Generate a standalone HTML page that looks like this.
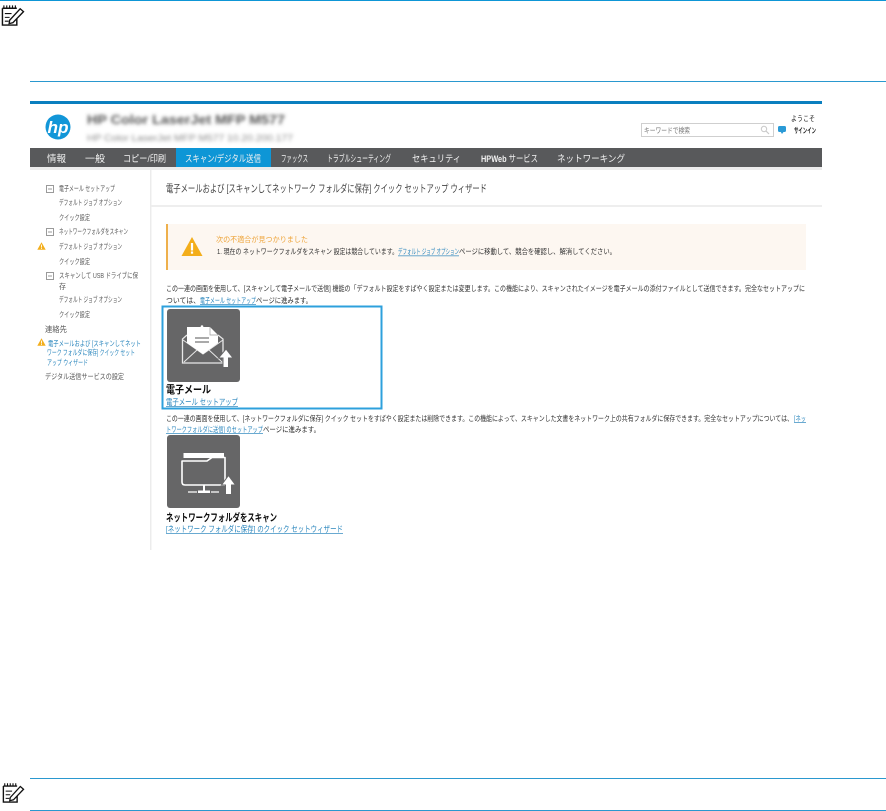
<!DOCTYPE html>
<html lang="ja"><head><meta charset="utf-8"><title>クイック セットアップ ウィザード</title>
<style>
html,body{margin:0;padding:0;background:#fff;width:886px;height:811px;overflow:hidden}
svg{display:block}
text{font-family:"Liberation Sans","Noto Sans CJK JP",sans-serif;font-size:8px;fill:#444}
.s{filter:url(#t)}
.side text{font-size:7.5px;fill:#5a5a5a}
.nav text{font-size:9.5px;fill:#f2f2f2}
.p text{font-size:7.5px;fill:#333}
.l{fill:#2a86bd!important}
</style></head><body>
<svg width="886" height="811" viewBox="0 0 886 811" xmlns="http://www.w3.org/2000/svg">
<defs>
<filter id="t" x="-5%" y="-30%" width="110%" height="160%"><feGaussianBlur stdDeviation="0.3"/></filter>
<filter id="b" x="-10%" y="-60%" width="120%" height="220%"><feGaussianBlur stdDeviation="1.8"/></filter>
<symbol id="note" viewBox="0 0 24 24" overflow="visible">
<path d="M1.5 5.5H16.5M1.5 5.5V23H16.5V15" fill="none" stroke="#111" stroke-width="1.5"/>
<path d="M3 5V2.5M6 5V2.5M9 5V2.5M12 5V2.5M15 5V2.5" stroke="#111" stroke-width="1.2"/>
<path d="M4 11H11M4 15H9M4 19H8" stroke="#111" stroke-width="1.1"/>
<path d="M9 18L20 6L23.5 9L12.5 20.5L8.5 21.5Z" fill="#fff" stroke="#111" stroke-width="1.4"/>
</symbol>
<symbol id="warn" viewBox="0 0 22 20" overflow="visible">
<path d="M11 .5L21.5 19.5H.5Z" fill="#f3ae1b"/>
<rect x="9.9" y="6.5" width="2.2" height="7.5" fill="#fff"/><rect x="9.9" y="15" width="2.2" height="2.2" fill="#fff"/>
</symbol>
</defs>
<rect width="886" height="811" fill="#fff"/>

<!-- note rules -->
<rect x="0" y="0" width="886" height="1" fill="#0e96d6"/>
<rect x="30" y="81" width="856" height="1" fill="#2a98cf"/>
<use href="#note" x="1" y="3" width="23" height="23"/>
<rect x="30" y="778" width="856" height="1" fill="#2a98cf"/>
<rect x="30" y="810" width="856" height="1" fill="#2a98cf"/>
<use href="#note" x="2" y="781" width="22" height="22"/>

<!-- header -->
<rect x="30" y="101" width="792" height="3" fill="#0a7fbf"/>
<circle cx="58" cy="127" r="12.5" fill="#1296d8"/>
<text x="47.500" y="133" style="font-size:17px;font-weight:bold;font-style:italic;fill:#fff" textLength="21" lengthAdjust="spacingAndGlyphs">hp</text>
<g filter="url(#b)">
<text x="87" y="124" style="font-size:13px;font-weight:bold;fill:#555" textLength="198" lengthAdjust="spacingAndGlyphs">HP Color LaserJet MFP M577</text>
<text x="87" y="141" style="font-size:9px;fill:#8a8a8a" textLength="206" lengthAdjust="spacingAndGlyphs">HP Color LaserJet MFP M577   10.20.200.177</text>
</g>

<!-- search -->
<rect x="641.500" y="123.500" width="132" height="13" fill="#fff" stroke="#cfcfcf"/>
<g class="s">
<text x="644" y="133" style="font-size:7.5px;fill:#777" textLength="46" lengthAdjust="spacingAndGlyphs">キーワードで検索</text>
<text x="791" y="121" style="font-size:7.5px;fill:#222" textLength="24" lengthAdjust="spacingAndGlyphs">ようこそ</text>
<text x="794" y="133" style="font-size:7.5px;fill:#222;font-weight:bold" textLength="22" lengthAdjust="spacingAndGlyphs">サインイン</text>
</g>
<circle cx="764" cy="129" r="2.7" fill="none" stroke="#c8c8c8"/><path d="M766 131L769 134" stroke="#c8c8c8" stroke-width="1.2"/>
<path d="M778 127.500a1.500 1.500 0 0 1 1.500-1.500h5a1.500 1.500 0 0 1 1.500 1.500v3a1.500 1.500 0 0 1-1.500 1.500h-1l-1.500 2-1.200-2h-1.300a1.500 1.500 0 0 1-1.500-1.500z" fill="#2a9ad6"/>

<!-- nav -->
<rect x="30" y="148" width="792" height="19" fill="#58595b"/>
<rect x="30" y="167" width="792" height="3" fill="#ececec"/>
<rect x="176" y="148" width="95" height="19" fill="#0e96d6"/>
<g class="nav s">
<text x="47" y="162" textLength="19" lengthAdjust="spacingAndGlyphs">情報</text>
<text x="85" y="162" textLength="20" lengthAdjust="spacingAndGlyphs">一般</text>
<text x="123" y="162" textLength="43" lengthAdjust="spacingAndGlyphs">コピー/印刷</text>
<text x="185" y="162" textLength="76" lengthAdjust="spacingAndGlyphs">スキャン/デジタル送信</text>
<text x="281" y="162" textLength="27" lengthAdjust="spacingAndGlyphs">ファックス</text>
<text x="327" y="162" textLength="64" lengthAdjust="spacingAndGlyphs">トラブルシューティング</text>
<text x="412" y="162" textLength="49" lengthAdjust="spacingAndGlyphs">セキュリティ</text>
<text x="481" y="162" textLength="57" lengthAdjust="spacingAndGlyphs"><tspan font-weight="bold">HPWeb</tspan> サービス</text>
<text x="557" y="162" textLength="68" lengthAdjust="spacingAndGlyphs">ネットワーキング</text>
</g>

<!-- sidebar -->
<rect x="150" y="170" width="1.500" height="380" fill="#ececec"/>
<g fill="none" stroke="#9a9a9a">
<rect x="46.500" y="185.500" width="7" height="7"/><path d="M48 189H52"/>
<rect x="46.500" y="228.500" width="7" height="7"/><path d="M48 232H52"/>
<rect x="46.500" y="272.500" width="7" height="7"/><path d="M48 276H52"/>
</g>
<use href="#warn" x="37" y="242" width="9" height="8"/>
<use href="#warn" x="37" y="338" width="9" height="8"/>
<g class="side s">
<text x="59" y="191" textLength="56" lengthAdjust="spacingAndGlyphs">電子メール セットアップ</text>
<text x="59" y="205" textLength="63" lengthAdjust="spacingAndGlyphs">デフォルト ジョブ オプション</text>
<text x="59" y="220" textLength="31" lengthAdjust="spacingAndGlyphs">クイック設定</text>
<text x="59" y="234" textLength="69" lengthAdjust="spacingAndGlyphs">ネットワークフォルダをスキャン</text>
<text x="59" y="249" textLength="63" lengthAdjust="spacingAndGlyphs">デフォルト ジョブ オプション</text>
<text x="59" y="264" textLength="31" lengthAdjust="spacingAndGlyphs">クイック設定</text>
<text x="59" y="278" textLength="79" lengthAdjust="spacingAndGlyphs">スキャンして USB ドライブに保</text>
<text x="59" y="289" textLength="7" lengthAdjust="spacingAndGlyphs">存</text>
<text x="59" y="302" textLength="63" lengthAdjust="spacingAndGlyphs">デフォルト ジョブ オプション</text>
<text x="59" y="317" textLength="31" lengthAdjust="spacingAndGlyphs">クイック設定</text>
<text x="45" y="332" style="font-size:8px" textLength="22" lengthAdjust="spacingAndGlyphs">連絡先</text>
<text class="l" x="48" y="346" textLength="93" lengthAdjust="spacingAndGlyphs">電子メールおよび [スキャンしてネット</text>
<text class="l" x="47" y="355" textLength="88" lengthAdjust="spacingAndGlyphs">ワーク フォルダに保存] クイック セット</text>
<text class="l" x="47" y="365" textLength="41" lengthAdjust="spacingAndGlyphs">アップ ウィザード</text>
<text x="45" y="379" textLength="79" lengthAdjust="spacingAndGlyphs">デジタル送信サービスの設定</text>
</g>

<!-- title -->
<text class="s" x="166" y="192" style="font-size:10.500px;fill:#444" textLength="321" lengthAdjust="spacingAndGlyphs">電子メールおよび [スキャンしてネットワーク フォルダに保存] クイック セットアップ ウィザード</text>
<rect x="151" y="205" width="671" height="2" fill="#eeeeee"/>

<!-- warning -->
<rect x="166" y="224" width="640" height="46" fill="#fdf7f1"/>
<rect x="166" y="224" width="2" height="46" fill="#eeb04c"/>
<use href="#warn" x="181" y="236" width="22" height="21"/>
<g class="s">
<text x="216" y="242" style="font-size:7.5px;fill:#eea53c" textLength="92" lengthAdjust="spacingAndGlyphs">次の不適合が見つかりました</text>
<text x="217" y="254" style="font-size:7.500px;fill:#333" textLength="181" lengthAdjust="spacingAndGlyphs">1. 現在の ネットワークフォルダをスキャン 設定は競合しています。</text>
<text class="l" x="398" y="254" style="font-size:7.500px" textLength="61" lengthAdjust="spacingAndGlyphs">デフォルト ジョブ オプション</text>
<text x="459" y="254" style="font-size:7.500px;fill:#333" textLength="157" lengthAdjust="spacingAndGlyphs">ページに移動して、競合を確認し、解消してください。</text>
</g>
<rect x="398" y="255.500" width="61" height=".7" fill="#2a86bd"/>

<!-- paragraph 1 -->
<g class="p s">
<text x="166" y="291" textLength="639" lengthAdjust="spacingAndGlyphs">この一連の画面を使用して、[スキャンして電子メールで送信] 機能の「デフォルト設定をすばやく設定または変更します。この機能により、スキャンされたイメージを電子メールの添付ファイルとして送信できます。完全なセットアップに</text>
<text x="166" y="303" textLength="34" lengthAdjust="spacingAndGlyphs">ついては、</text>
<text class="l" x="200" y="303" textLength="56" lengthAdjust="spacingAndGlyphs">電子メール セットアップ</text>
<text x="256" y="303" textLength="56" lengthAdjust="spacingAndGlyphs">ページに進みます。</text>
</g>
<rect x="200" y="304" width="56" height=".7" fill="#2a86bd"/>

<!-- tile 1 -->
<rect x="162.500" y="306.500" width="219" height="102" fill="none" stroke="#2ea0dc" stroke-width="2"/>
<rect x="167" y="309" width="73" height="73" rx="3" fill="#666667"/>
<path d="M187 335L182.500 339V363H223V339L218 335" fill="none" stroke="#e8e8e8" stroke-width="1.300"/>
<path d="M184 362L197 350M222 362L209 350" stroke="#e8e8e8" stroke-width="1"/>
<path d="M183 340L203 354L223 340" fill="none" stroke="#e8e8e8" stroke-width="1"/>
<path d="M187 327H210L218 335V343L203 354L187 343Z" fill="#fff"/>
<path d="M210 327V335H218" fill="none" stroke="#999" stroke-width=".7"/>
<path d="M195 338H209M195 342H209" stroke="#777" stroke-width="1.200"/>
<circle cx="202" cy="326.500" r="1.300" fill="#fff"/>
<path d="M226 349L233 358H228.500V367.500H223V358H218.500Z" fill="#fff" stroke="#666667" stroke-width="1"/>
<g class="s">
<text x="166" y="393" style="font-size:10.500px;font-weight:bold;fill:#111" textLength="45" lengthAdjust="spacingAndGlyphs">電子メール</text>
<text class="l" x="166" y="405" style="font-size:8.500px" textLength="72" lengthAdjust="spacingAndGlyphs">電子メール セットアップ</text>
</g>
<rect x="166" y="406" width="72" height=".7" fill="#2a86bd"/>

<!-- paragraph 2 -->
<g class="p s">
<text x="166" y="421" textLength="627" lengthAdjust="spacingAndGlyphs">この一連の画面を使用して、[ネットワークフォルダに保存] クイック セットをすばやく設定または削除できます。この機能によって、スキャンした文書をネットワーク上の共有フォルダに保存できます。完全なセットアップについては、</text>
<text class="l" x="794" y="421" textLength="12" lengthAdjust="spacingAndGlyphs">[ネッ</text>
<text class="l" x="166" y="432" textLength="97" lengthAdjust="spacingAndGlyphs">トワークフォルダに送信] のセットアップ</text>
<text x="263" y="432" textLength="57" lengthAdjust="spacingAndGlyphs">ページに進みます。</text>
</g>
<rect x="794" y="422" width="12" height=".7" fill="#2a86bd"/>
<rect x="166" y="433" width="97" height=".7" fill="#2a86bd"/>

<!-- tile 2 -->
<rect x="167" y="435" width="73" height="73" rx="3" fill="#666667"/>
<path d="M183.500 453H224V458H183.500Z" fill="#fff"/>
<path d="M182 461H207L212 457.500H225V485H185Q182 485 182 482Z" fill="#666667" stroke="#fff" stroke-width="1.600" stroke-linejoin="round"/>
<path d="M204 485V491" stroke="#fff" stroke-width="2"/>
<path d="M188 492H197M211 492H219" stroke="#fff" stroke-width="1.200"/>
<rect x="198" y="490.500" width="12" height="2.500" fill="#fff"/>
<path d="M228.500 475.500L235.500 485H231.500V494.500H225.500V485H221.500Z" fill="#fff" stroke="#666667" stroke-width="1"/>
<g class="s">
<text x="166" y="521" style="font-size:10.500px;font-weight:bold;fill:#111" textLength="111" lengthAdjust="spacingAndGlyphs">ネットワークフォルダをスキャン</text>
<text class="l" x="166" y="532" style="font-size:8.500px" textLength="177" lengthAdjust="spacingAndGlyphs">[ネットワーク フォルダに保存] のクイック セットウィザード</text>
</g>
<rect x="166" y="533" width="177" height=".7" fill="#2a86bd"/>
</svg>
</body></html>
